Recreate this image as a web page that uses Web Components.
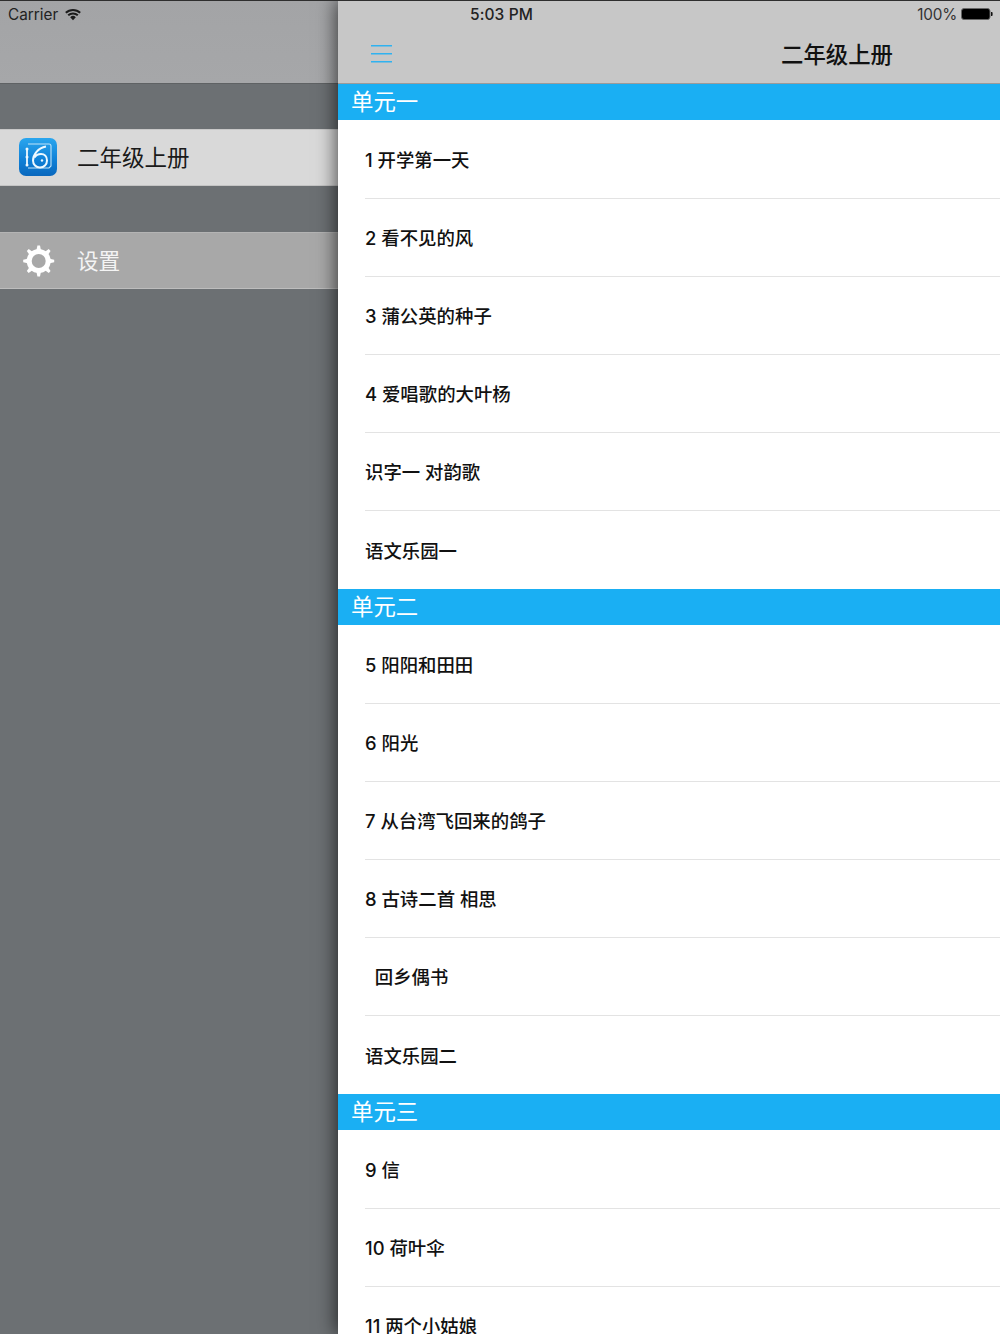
<!DOCTYPE html>
<html lang="zh"><head><meta charset="utf-8"><title>二年级上册</title>
<style>
html,body{margin:0;padding:0;height:100%;overflow:hidden;font-family:"Inter","Noto Sans CJK SC",sans-serif}
</style></head><body>
<app-shell>
  <status-bar slot="status"></status-bar>
  <side-menu slot="side">
    <menu-item selected label="二年级上册"><svg slot="icon" width="38" height="38" viewBox="0 0 38 38">
      <defs><linearGradient id="g" x1="0" y1="0" x2="0" y2="1"><stop offset="0" stop-color="#2aa6ee"/><stop offset=".6" stop-color="#0f7fd6"/><stop offset="1" stop-color="#0a68bd"/></linearGradient></defs>
      <rect width="38" height="38" rx="7" fill="url(#g)"/>
      <path d="M9 6h21a2 2 0 0 1 2 2v20l-2 2H9" fill="none" stroke="#bfe3f8" stroke-width="1.100"/>
      <path d="M8 11v16" fill="none" stroke="#eef9ff" stroke-width="1.800"/>
      <circle cx="8" cy="11" r="1.500" fill="#eef9ff"/><circle cx="8" cy="19" r="1.500" fill="#eef9ff"/><circle cx="8" cy="27" r="1.500" fill="#eef9ff"/>
      <path d="M27 8.500C19 10 14 16.500 14 22.500c0 4 3 7 7 7s7-3 7-7-2.500-6.500-6-6.500c-2.500 0-5 1-6.500 3.500" fill="none" stroke="#eef9ff" stroke-width="2"/>
      <circle cx="23" cy="22.500" r="1.200" fill="#eef9ff"/>
    </svg></menu-item>
    <menu-item label="设置"><svg slot="icon" width="38" height="38" viewBox="0 0 38 38">
      <g transform="translate(.7 0)">
      <g fill="#fff"><path d="M16.800 8l.9-4.500h2.600l.9 4.500 .0 22-.9 4.500h-2.600l-.9-4.500z"/><path d="M16.800 8l.9-4.500h2.600l.9 4.500 .0 22-.9 4.500h-2.600l-.9-4.500z" transform="rotate(45 19 19)"/><path d="M16.800 8l.9-4.500h2.600l.9 4.500 .0 22-.9 4.500h-2.600l-.9-4.500z" transform="rotate(90 19 19)"/><path d="M16.800 8l.9-4.500h2.600l.9 4.500 .0 22-.9 4.500h-2.600l-.9-4.500z" transform="rotate(135 19 19)"/></g>
      <circle cx="19" cy="19" r="12" fill="#fff"/>
      <circle cx="19" cy="19" r="7" fill="#a8a8a8"/>
      </g>
    </svg></menu-item>
  </side-menu>
  <main-panel slot="main" title-text="二年级上册">
    <lesson-section label="单元一">
      <lesson-row>1 开学第一天</lesson-row><lesson-row>2 看不见的风</lesson-row><lesson-row>3 蒲公英的种子</lesson-row><lesson-row>4 爱唱歌的大叶杨</lesson-row><lesson-row>识字一 对韵歌</lesson-row><lesson-row last>语文乐园一</lesson-row>
    </lesson-section>
    <lesson-section label="单元二">
      <lesson-row>5 阳阳和田田</lesson-row><lesson-row>6 阳光</lesson-row><lesson-row>7 从台湾飞回来的鸽子</lesson-row><lesson-row>8 古诗二首 相思</lesson-row><lesson-row>  回乡偶书</lesson-row><lesson-row last>语文乐园二</lesson-row>
    </lesson-section>
    <lesson-section label="单元三">
      <lesson-row>9 信</lesson-row><lesson-row>10 荷叶伞</lesson-row><lesson-row>11 两个小姑娘</lesson-row>
    </lesson-section>
  </main-panel>
</app-shell>
<script>
function def(name,html,extra){
  customElements.define(name,class extends HTMLElement{
    constructor(){super();this.attachShadow({mode:"open"}).innerHTML=html}
    connectedCallback(){extra&&extra(this)}
  });
}
def("app-shell",`<style>
:host{display:block;position:relative;width:1000px;height:1334px;overflow:hidden}
.row{display:flex;height:100%}
::slotted([slot=side]){flex:0 0 338px}
::slotted([slot=main]){flex:1 1 0;min-width:0}
</style><slot name="status"></slot><div class="row"><slot name="side"></slot><slot name="main"></slot></div>`);
def("status-bar",`<style>
:host{display:grid;grid-template-columns:1fr auto 1fr;align-items:center;position:absolute;z-index:3;top:0;left:0;right:0;height:28px;border-top:1px solid #2e2e2e;box-sizing:border-box;padding:0 7px 0 8px;color:#222;font:15.300px/1 "Inter","Liberation Sans",sans-serif}
.l,.r{display:flex;align-items:center}
.l{gap:7px}.r{justify-content:flex-end;gap:4px;color:#333}
.r span{letter-spacing:-.2px}
.t{font-weight:500;font-size:15.500px;letter-spacing:.1px;position:relative;left:1px}
</style><div class="l"><span>Carrier</span><svg width="16" height="13" viewBox="0 0 16 13"><path d="M.8 4.800A10.500 10.500 0 0 1 15.200 4.800M3.200 7.300A7 7 0 0 1 12.800 7.300" fill="none" stroke="#1c1c1c" stroke-width="2"/><path d="M5.200 9.200A4 4 0 0 1 10.800 9.200L8 12.300Z" fill="#1c1c1c"/></svg></div>
<div class="t">5:03 PM</div>
<div class="r"><span>100%</span><svg width="32" height="12" viewBox="0 0 32 12"><rect x=".5" y=".5" width="28.500" height="11" rx="2.500" fill="#000" stroke="#666"/><path d="M30 4h.6a1 1 0 0 1 1 1v2a1 1 0 0 1-1 1h-.6z" fill="#111"/></svg></div>`);
def("side-menu",`<style>
:host{display:block;background:#6c7073;height:100%}
.top{height:84px;box-sizing:border-box;background:linear-gradient(#a3a4a6,#a6a7a9);border-bottom:1px solid #5f6264}
.list{display:flex;flex-direction:column;gap:45.600px;padding-top:45px}
</style><div class="top"></div><div class="list"><slot></slot></div>`);
def("menu-item",`<style>
:host{display:flex;align-items:center;box-sizing:border-box;height:57.300px;padding-left:19px;gap:20px;background:#a8a8a8;color:#f4f4f4;font-size:21.600px;border-top:1px solid #b4b4b4;border-bottom:1px solid #bdbdbd}
:host([selected]){background:#d9d9d9;color:#1a1a1a;font-size:22.500px;border-top-color:#c8c8c8;border-bottom-color:#c4c4c4}
:host([selected]) span{padding-bottom:4px}
:host([selected]) ::slotted(svg){margin-bottom:1.500px}
span{padding-bottom:3px}
::slotted(svg){display:block;flex:none;filter:blur(.35px)}
</style><slot name="icon"></slot><span id="t"></span>`,el=>{el.shadowRoot.getElementById("t").textContent=el.getAttribute("label")});
def("main-panel",`<style>
:host{display:block;position:relative;z-index:1;background:#fff;height:100%;box-shadow:-2px 0 18px rgba(0,0,0,.65)}
header{display:flex;align-items:center;justify-content:center;position:relative;height:84px;box-sizing:border-box;padding:22px 0 0 336px;background:#c7c7c7;border-bottom:1px solid #9a9a9a;color:#111;font-size:22.400px;font-weight:500}
h1{all:unset}
button{all:unset;position:absolute;left:33px;top:45px;display:flex;flex-direction:column;gap:7px;width:21px}
button i{display:block;height:1px;background:#2fb2f0;box-shadow:0 1px 0 rgba(47,178,240,.5)}
</style><header><button aria-label="菜单"><i></i><i></i><i></i></button><h1 id="h"></h1></header><slot></slot>`,el=>{el.shadowRoot.getElementById("h").textContent=el.getAttribute("title-text")});
def("lesson-section",`<style>
:host{display:block}
.h{height:36px;margin-bottom:.46px;box-sizing:border-box;background:#1aaff3;color:#fff;font-size:22.400px;line-height:36px;padding-left:13px;white-space:nowrap}
</style><div class="h" id="h"></div><slot></slot>`,el=>{el.shadowRoot.getElementById("h").textContent=el.getAttribute("label")});
def("lesson-row",`<style>
:host{display:block;height:78.125px;box-sizing:border-box;padding-left:27px;color:#111;font-size:18.400px;font-weight:500}
.i{display:flex;align-items:center;height:100%;box-sizing:border-box;padding-bottom:.8px;border-bottom:1px solid #e3e3e3;white-space:pre}
:host([last]) .i{border-bottom:0}
</style><div class="i"><slot></slot></div>`);
</script>
</body></html>
